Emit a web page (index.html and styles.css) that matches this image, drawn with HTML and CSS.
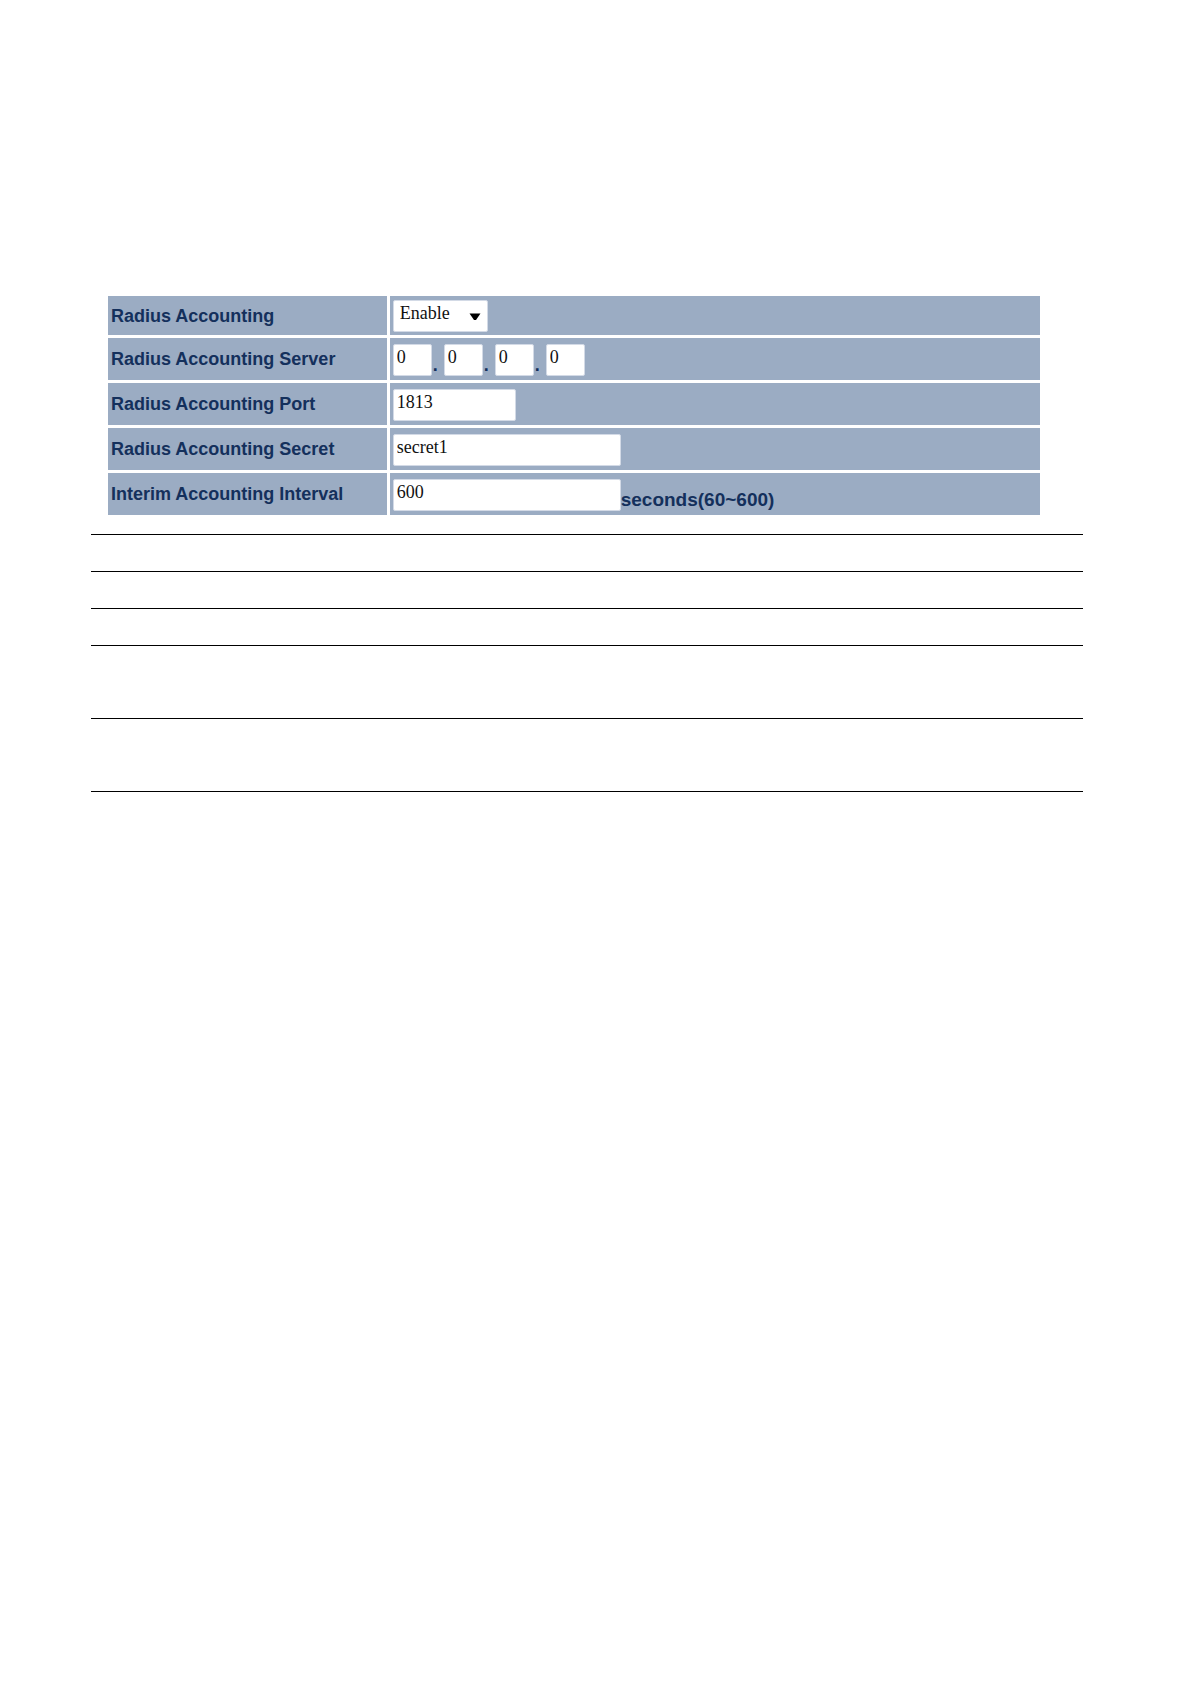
FILE: index.html
```html
<!DOCTYPE html>
<html lang="en">
<head>
<meta charset="UTF-8">
<title>Radius Accounting</title>
<link rel="stylesheet" href="styles.css">
</head>
<body>
  <form class="settings">
    <table class="form-table">
      <tr class="first">
        <th><label for="accounting">Radius Accounting</label></th>
        <td>
          <div class="select">
            <select id="accounting">
              <option selected>Enable</option>
              <option>Disable</option>
            </select>
            <svg class="arrow" width="12" height="8" viewBox="0 0 12 8"><path d="M0.5 0.5h11L7 7H5z"/></svg>
          </div>
        </td>
      </tr>
      <tr>
        <th><label for="ip1">Radius Accounting Server</label></th>
        <td>
          <div class="field">
            <input type="text" class="octet" id="ip1" value="0"><span class="dot">.</span>
            <input type="text" class="octet" aria-label="Server octet 2" value="0"><span class="dot">.</span>
            <input type="text" class="octet" aria-label="Server octet 3" value="0"><span class="dot">.</span>
            <input type="text" class="octet" aria-label="Server octet 4" value="0">
          </div>
        </td>
      </tr>
      <tr>
        <th><label for="port">Radius Accounting Port</label></th>
        <td><div class="field"><input type="text" class="port" id="port" value="1813"></div></td>
      </tr>
      <tr>
        <th><label for="secret">Radius Accounting Secret</label></th>
        <td><div class="field"><input type="text" class="long" id="secret" value="secret1"></div></td>
      </tr>
      <tr>
        <th><label for="interval">Interim Accounting Interval</label></th>
        <td><div class="field"><input type="text" class="long" id="interval" value="600"><span class="unit">seconds(60~600)</span></div></td>
      </tr>
    </table>
  </form>

  <!-- ruled description rows -->
  <div class="rules">
    <div class="rule"></div>
    <div class="rule"></div>
    <div class="rule"></div>
    <div class="rule tall"></div>
    <div class="rule tall"></div>
  </div>
</body>
</html>
```
FILE: styles.css
```css
body {
    margin: 0;
    padding: 293px 107px 80px 91px;
    background: #fff;
    color: #14305c;
    font: bold 18px/22px "Liberation Sans", Arial, sans-serif;
}
.settings {
    margin: 0 40px 16px 14px;
}
.form-table {
    width: 100%;
    border-spacing: 3px;
    table-layout: fixed;
}
th, td {
    height: 42px;
    padding: 0 3px;
    box-sizing: border-box;
    background: #9bacc3;
    text-align: left;
    vertical-align: middle;
}
th {
    width: 30%;
}
.first th, .first td {
    height: 39px;
}
.field {
    display: flex;
    align-items: flex-end;
    padding-top: 1px;
}
input, select {
    height: 32px;
    margin: 0;
    box-sizing: border-box;
    border: 1px solid #d3dae6;
    border-radius: 2px;
    background: #fff;
    color: #111;
    font: 18px "Liberation Serif", "Times New Roman", serif;
}
input {
    padding: 0 3px 5px;
}
.octet {
    width: 39px;
}
.port {
    width: 123px;
}
.long {
    width: 228px;
}
.dot {
    width: 11px;
    padding-left: 1px;
}
.unit {
    font-size: 19px;
}
.select {
    position: relative;
    width: 95px;
    height: 32px;
}
select {
    width: 100%;
    padding: 0 20px 5px 6px;
    appearance: none;
}
.arrow {
    position: absolute;
    top: 13px;
    right: 7px;
    fill: #000;
    pointer-events: none;
}
.rules {
    border-top: 1px solid #000;
}
.rule {
    height: 36px;
    border-bottom: 1px solid #000;
}
.tall {
    height: 72px;
}
```
